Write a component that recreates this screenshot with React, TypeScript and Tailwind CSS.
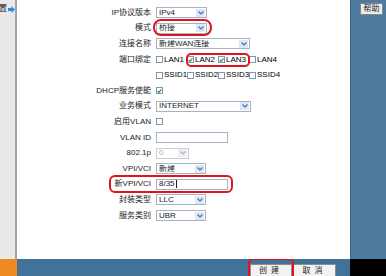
import React from "react";

const font = { fontFamily: '"Liberation Sans", "Noto Sans CJK SC", sans-serif' };

function Chevron({ muted }: { muted?: boolean }) {
  return (
    <svg width="6" height="4" viewBox="0 0 6 4" aria-hidden>
      <path d="M0.5 0.5 L3 3 L5.5 0.5" fill="none" stroke={muted ? "#a9b4c4" : "#4a6fb0"} strokeWidth="1.2" />
    </svg>
  );
}

function Select({ w, value, disabled }: { w: string; value: string; disabled?: boolean }) {
  return (
    <div
      className={`flex h-[11px] items-center border bg-white ${w} ${
        disabled ? "border-[#c9ced6] text-[#b0b0b0]" : "border-[#a7b1bf] text-[#222]"
      }`}
    >
      <span className="flex-1 truncate pl-[2px] leading-none">{value}</span>
      <span
        className={`mr-px flex h-[8px] w-[9px] items-center justify-center ${
          disabled ? "bg-[#eef0f3]" : "bg-[#dce6f6]"
        }`}
      >
        <Chevron muted={disabled} />
      </span>
    </div>
  );
}

function Checkbox({ checked }: { checked?: boolean }) {
  return (
    <span className="flex h-[7px] w-[7px] shrink-0 items-center justify-center border border-[#8096ad] bg-white">
      {checked ? (
        <svg width="6" height="6" viewBox="0 0 6 6" aria-hidden>
          <path d="M0.8 3 L2.4 4.6 L5.3 1" fill="none" stroke="#1f9a2a" strokeWidth="1.3" />
        </svg>
      ) : null}
    </span>
  );
}

function Check({ label, checked }: { label: string; checked?: boolean }) {
  return (
    <span className="flex w-[31px] shrink-0 items-center">
      <Checkbox checked={checked} />
      <span className="ml-px leading-none">{label}</span>
    </span>
  );
}

function Row({ label, children }: { label?: string; children: React.ReactNode }) {
  return (
    <div className="flex h-[15.6px] items-center">
      <div className="w-[135px] shrink-0 pr-px text-right leading-none text-[#222]">{label}</div>
      <div className="ml-[4px] flex items-center">{children}</div>
    </div>
  );
}

export default function App() {
  return (
    <div className="flex h-[276px] w-[386px] flex-col overflow-hidden text-[8px]" style={font}>
      <div className="flex h-[259px]">
        <div className="flex w-[17px] shrink-0 justify-end overflow-hidden border-r-2 border-[#a3a3a3] bg-[#e9e9e9] pt-[5px]">
          <div className="flex h-[8px] shrink-0 items-center">
            <span className="leading-none text-[#222]">设置</span>
            <svg width="7" height="7" viewBox="0 0 7 7" className="ml-px" aria-hidden>
              <path d="M0 2 H3.5 V0 L7 3.5 L3.5 7 V5 H0 Z" fill="#2d8ae6" />
            </svg>
          </div>
        </div>

        <div className="relative flex-1 bg-white pt-[5px]">
          <Row label="IP协议版本">
            <Select w="w-[51px]" value="IPv4" />
          </Row>
          <Row label="模式">
            <Select w="w-[51px]" value="桥接" />
          </Row>
          <Row label="连接名称">
            <Select w="w-[94px]" value="新建WAN连接" />
          </Row>
          <Row label="端口绑定">
            <Check label="LAN1" />
            <Check label="LAN2" checked />
            <Check label="LAN3" checked />
            <Check label="LAN4" />
          </Row>
          <Row>
            <Check label="SSID1" />
            <Check label="SSID2" />
            <Check label="SSID3" />
            <Check label="SSID4" />
          </Row>
          <Row label="DHCP服务使能">
            <Checkbox checked />
          </Row>
          <Row label="业务模式">
            <Select w="w-[95px]" value="INTERNET" />
          </Row>
          <Row label="启用VLAN">
            <Checkbox />
          </Row>
          <Row label="VLAN ID">
            <div className="h-[11px] w-[72px] border border-[#a7b1bf] bg-white" />
          </Row>
          <Row label="802.1p">
            <Select w="w-[33px]" value="0" disabled />
          </Row>
          <Row label="VPI/VCI">
            <Select w="w-[50px]" value="新建" />
          </Row>
          <Row label="新VPI/VCI">
            <div className="flex h-[11px] w-[72px] items-center border border-[#a7b1bf] bg-white pl-[2px] leading-none text-[#222]">
              8/35<span className="ml-px h-[8px] w-px bg-[#222]" />
            </div>
          </Row>
          <Row label="封装类型">
            <Select w="w-[50px]" value="LLC" />
          </Row>
          <Row label="服务类别">
            <Select w="w-[50px]" value="UBR" />
          </Row>

          <div className="pointer-events-none absolute left-[136px] top-[19px] h-[17px] w-[59px] rounded-[8px] border-2 border-[#e0141e]" />
          <div className="pointer-events-none absolute left-[169px] top-[53px] h-[14px] w-[64px] rounded-[5px] border-2 border-[#e0141e]" />
          <div className="pointer-events-none absolute left-[92px] top-[175px] h-[18px] w-[124px] rounded-[6px] border-2 border-[#e0141e]" />
        </div>

        <div className="w-[36px] shrink-0 border-l border-[#3b6283] bg-[#4e7a9e] pl-[9px] pt-[3px]">
          <div className="flex h-[12px] w-[23px] items-center justify-center border border-[#7d8a96] bg-[#ececec] leading-none text-[#222]">
            帮助
          </div>
        </div>
      </div>

      <div className="flex h-[17px]">
        <div className="w-[17px] shrink-0 bg-[#ef8a20]" />
        <div className="relative flex flex-1 gap-[1px] overflow-hidden bg-[#41739a] pl-[233px] pt-[5px]">
          <div className="flex h-[14px] w-[42px] items-center justify-center border border-[#8d8d8d] bg-[#f2f2f2] leading-none tracking-[4px] text-[#222]">
            创建
          </div>
          <div className="flex h-[14px] w-[43px] items-center justify-center border border-[#8d8d8d] bg-[#f2f2f2] leading-none tracking-[4px] text-[#222]">
            取消
          </div>
          <div className="pointer-events-none absolute left-[231px] top-[-1px] h-[22px] w-[46px] rounded-[5px] border-2 border-[#e0141e]" />
        </div>
        <div className="w-[36px] shrink-0 bg-black" />
      </div>
    </div>
  );
}
